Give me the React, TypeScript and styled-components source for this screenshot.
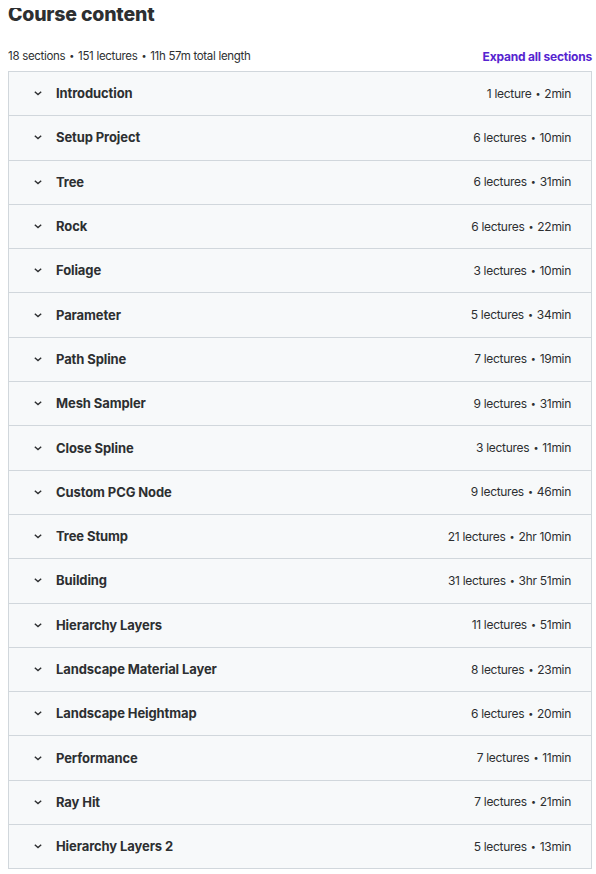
import React from "react";
import styled, { createGlobalStyle } from "styled-components";

const Global = createGlobalStyle`
  html {
    overflow: hidden;
  }
  body {
    margin: 8px 0 0 8px;
    background: #ffffff;
    font-family: Inter, "Noto Sans", sans-serif;
    color: #2d2f31;
  }
`;

const Wrapper = styled.div`
  width: 584px;
`;

const Heading = styled.h2`
  margin: 0;
  font-size: 19.5px;
  line-height: 28px;
  font-weight: 800;
  letter-spacing: -0.2px;
  margin-top: -8px;
`;

const StatsRow = styled.div`
  display: flex;
  justify-content: space-between;
  align-items: center;
  margin-top: 17px;
  height: 22px;
  margin-bottom: 4px;
`;

const Stats = styled.span`
  font-size: 11.5px;
  letter-spacing: -0.3px;
`;

const Dot = styled.span`
  font-size: 9px;
  vertical-align: 1px;
  padding: 0 1px;
`;

const ExpandLink = styled.button`
  border: none;
  background: none;
  padding: 0;
  font-family: inherit;
  font-size: 12px;
  font-weight: 700;
  color: #5624d0;
  letter-spacing: -0.2px;
  cursor: pointer;
`;

const List = styled.div`
  border: 1px solid #d1d7dc;
  border-bottom: none;
`;

const Row = styled.div`
  display: flex;
  align-items: center;
  box-sizing: border-box;
  height: 44.3px;
  padding: 0 20px 1px 24px;
  background: #f7f9fa;
  border-bottom: 1px solid #d1d7dc;
`;

const Chevron = styled.svg`
  width: 10px;
  height: 10px;
  margin-right: 13px;
  flex-shrink: 0;
`;

const Title = styled.span`
  flex: 1;
  font-size: 13px;
  font-weight: 700;
  letter-spacing: -0.1px;
`;

const Meta = styled.span`
  font-size: 12px;
  letter-spacing: -0.3px;
  color: #2d2f31;
`;

const sections: [string, string][] = [
  ["Introduction", "1 lecture • 2min"],
  ["Setup Project", "6 lectures • 10min"],
  ["Tree", "6 lectures • 31min"],
  ["Rock", "6 lectures • 22min"],
  ["Foliage", "3 lectures • 10min"],
  ["Parameter", "5 lectures • 34min"],
  ["Path Spline", "7 lectures • 19min"],
  ["Mesh Sampler", "9 lectures • 31min"],
  ["Close Spline", "3 lectures • 11min"],
  ["Custom PCG Node", "9 lectures • 46min"],
  ["Tree Stump", "21 lectures • 2hr 10min"],
  ["Building", "31 lectures • 3hr 51min"],
  ["Hierarchy Layers", "11 lectures • 51min"],
  ["Landscape Material Layer", "8 lectures • 23min"],
  ["Landscape Heightmap", "6 lectures • 20min"],
  ["Performance", "7 lectures • 11min"],
  ["Ray Hit", "7 lectures • 21min"],
  ["Hierarchy Layers 2", "5 lectures • 13min"],
];

const withDots = (s: string) =>
  s.split(" • ").flatMap((part, i) =>
    i === 0 ? [part] : [" ", <Dot key={i}>•</Dot>, " ", part]
  );

export default function App() {
  return (
    <Wrapper>
      <Global />
      <Heading>Course content</Heading>
      <StatsRow>
        <Stats>{withDots("18 sections • 151 lectures • 11h 57m total length")}</Stats>
        <ExpandLink>Expand all sections</ExpandLink>
      </StatsRow>
      <List>
        {sections.map(([t, m]) => (
          <Row key={t}>
            <Chevron viewBox="0 0 10 10">
              <path d="M1.8 3.8 L5 6.6 L8.2 3.8" fill="none" stroke="#2d2f31" strokeWidth="1.4" />
            </Chevron>
            <Title>{t}</Title>
            <Meta>{withDots(m)}</Meta>
          </Row>
        ))}
      </List>
    </Wrapper>
  );
}
